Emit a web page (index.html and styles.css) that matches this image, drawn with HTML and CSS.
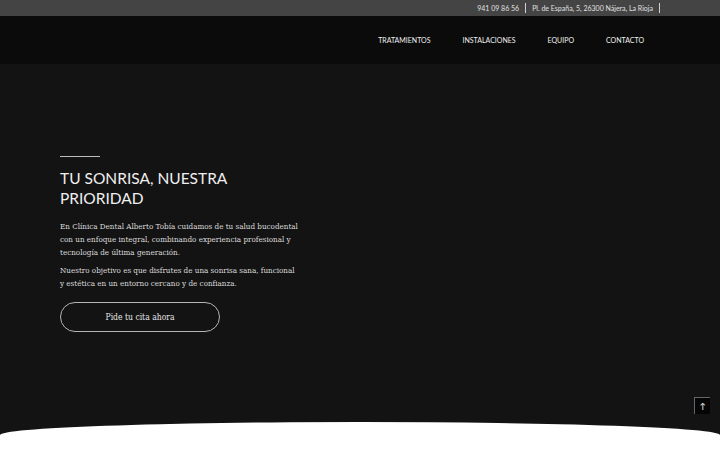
FILE: index.html
```html
<!DOCTYPE html>
<html lang="es">
    <head>
        <meta charset="UTF-8" />
        <meta name="viewport" content="width=device-width, initial-scale=1.0" />
        <title>Clínica Dental Alberto Tobía</title>
        <link rel="stylesheet" href="styles.css">
    </head>
    <body>
        <div class="top-bar">
            <span class="top-item">941 09 86 56</span>
            <span class="top-item">Pl. de España, 5, 26300 Nájera, La Rioja</span>
        </div>

        <nav class="main-nav">
            <a href="#">Tratamientos</a>
            <a href="#">Instalaciones</a>
            <a href="#">Equipo</a>
            <a href="#">Contacto</a>
        </nav>

        <section class="hero">
            <div class="hero-content">
                <div class="hero-line"></div>
                <h1>Tu sonrisa, nuestra prioridad</h1>
                <p>En Clínica Dental Alberto Tobía cuidamos de tu salud bucodental con un enfoque integral, combinando experiencia profesional y tecnología de última generación.</p>
                <p>Nuestro objetivo es que disfrutes de una sonrisa sana, funcional y estética en un entorno cercano y de confianza.</p>
                <a href="#" class="cta">Pide tu cita ahora</a>
            </div>
        </section>

        <section class="next-section"></section>

        <a href="#" class="to-top">&#8593;</a>
    </body>
</html>
```

FILE: styles.css
```css
body {
    margin: 0;
    background: #131313;
    font-family: Lato, "Open Sans", sans-serif;
    color: #e6e6e6;
}

a {
    color: inherit;
    text-decoration: none;
}

.top-bar {
    height: 16px;
    background: #444444;
    display: flex;
    justify-content: flex-end;
    align-items: center;
    padding-right: 60px;
    font-size: 7px;
    color: #e0e0e0;
}

.top-item {
    padding: 0 6px;
    border-right: 1px solid #cfcfcf;
    line-height: 10px;
}

.main-nav {
    height: 48px;
    background: #0b0b0b;
    display: flex;
    justify-content: flex-end;
    align-items: center;
    gap: 32px;
    padding-right: 76px;
    font-size: 7px;
    font-weight: 400;
    text-transform: uppercase;
    color: #f0f0f0;
}

.hero {
    height: 358px;
    display: flex;
    align-items: flex-start;
    padding-left: 60px;
}

.hero-content {
    width: 239px;
    padding-top: 92px;
}

.hero-line {
    width: 40px;
    height: 1px;
    background: #bdbdbd;
}

.hero h1 {
    margin: 11px 0 12px;
    font-size: 15.5px;
    font-weight: 400;
    line-height: 20px;
    text-transform: uppercase;
    color: #efefef;
}

.hero p {
    margin: 0 0 5px;
    font-family: "DejaVu Serif", serif;
    font-stretch: condensed;
    font-size: 8px;
    line-height: 13px;
    color: #dcdcdc;
}

.cta {
    display: flex;
    justify-content: center;
    align-items: center;
    width: 158px;
    height: 28px;
    margin-top: 12px;
    border: 1px solid #b5b5b5;
    border-radius: 15px;
    font-family: "DejaVu Serif", serif;
    font-stretch: condensed;
    font-size: 8.5px;
    color: #e6e6e6;
}

.next-section {
    height: 300px;
    background: #ffffff;
    border-radius: 50% 50% 0 0 / 13px 13px 0 0;
}

.to-top {
    position: fixed;
    right: 10px;
    bottom: 36px;
    width: 15px;
    height: 16px;
    background: #050505;
    border-left: 1px solid #666;
    border-top: 1px solid #666;
    display: flex;
    justify-content: center;
    align-items: center;
    font-size: 8px;
    font-weight: 700;
    color: #ddd;
}
```
